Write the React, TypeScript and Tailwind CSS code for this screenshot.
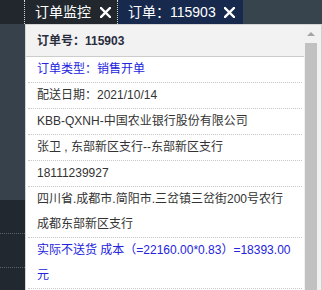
import React from 'react'

function CloseX() {
  return (
    <svg width="11" height="11" viewBox="0 0 11 11" className="block">
      <path d="M1 1 L10 10 M10 1 L1 10" stroke="#fff" strokeWidth="2.4" strokeLinecap="square" />
    </svg>
  )
}

export default function App() {
  const font = { fontFamily: '"Liberation Sans", Arial, "Noto Sans CJK SC", sans-serif' }

  return (
    <div className="w-[322px] h-[290px] overflow-hidden bg-[#37434d] text-[12px]" style={font}>
      {/* tab bar */}
      <div className="flex h-[24px]">
        <div className="w-[25px] bg-[#22272e] border-r border-dotted border-white/80"></div>
        <div className="w-[93px] flex items-center gap-[9px] pl-[10px] bg-[#22272e] border-r border-dotted border-white/80 text-white text-[14px]">
          <span>订单监控</span>
          <CloseX />
        </div>
        <div className="w-[125px] flex items-center gap-[8px] pl-[10px] bg-[#172a4e] text-white text-[14px]">
          <span>订单：115903</span>
          <CloseX />
        </div>
        <div className="flex-1 bg-[#37434d]"></div>
      </div>

      <div className="flex h-[266px]">
        {/* left strip */}
        <div className="w-[25px] flex flex-col">
          <div className="h-[176px] bg-[#36414b]"></div>
          <div className="flex-1 bg-[#22282f] pt-[33px]">
            <div className="h-[34px] border-t border-dotted border-[#5a6169]"></div>
            <div className="border-t border-dotted border-[#5a6169]"></div>
          </div>
        </div>

        {/* popup */}
        <div className="flex-1 flex bg-white border-t border-l border-[#d4d4d4]">
          <div className="w-[278px] flex flex-col">
            <div className="h-[32px] flex items-center pl-[11px] bg-[#f2f2f2] border-b border-[#cccccc] font-bold text-[#2a2d3d]">
              订单号：115903
            </div>
            <div className="px-[2px]">
              <div className="pl-[9px] leading-[25px] border-b border-dotted border-[#c8c8c8] text-[#2323e0]">
                订单类型：销售开单
              </div>
              <div className="pl-[9px] leading-[25px] border-b border-dotted border-[#c8c8c8] text-[#333]">
                配送日期：2021/10/14
              </div>
              <div className="pl-[9px] leading-[25px] border-b border-dotted border-[#c8c8c8] text-[#333]">
                KBB-QXNH-中国农业银行股份有限公司
              </div>
              <div className="pl-[9px] leading-[25px] border-b border-dotted border-[#c8c8c8] text-[#333]">
                张卫 , 东部新区支行--东部新区支行
              </div>
              <div className="pl-[9px] leading-[25px] border-b border-dotted border-[#c8c8c8] text-[#333]">
                18111239927
              </div>
              <div className="pl-[9px] leading-[25px] border-b border-dotted border-[#c8c8c8] text-[#333]">
                四川省.成都市.简阳市.三岔镇三岔街200号农行
                <br />
                成都东部新区支行
              </div>
              <div className="pl-[9px] leading-[25px] border-b border-dotted border-[#c8c8c8] text-[#2323e0]">
                实际不送货 成本（=22160.00*0.83）=18393.00
                <br />
                元
              </div>
            </div>
          </div>

          {/* scrollbar */}
          <div className="w-[14px] flex flex-col bg-[#f1f1f1]">
            <div className="h-[18px] flex items-center justify-center">
              <div className="w-0 h-0 border-l-[4px] border-r-[4px] border-b-[4px] border-l-transparent border-r-transparent border-b-[#a3a3a3]"></div>
            </div>
            <div className="flex-1 mx-[1px] bg-[#c1c1c1]"></div>
          </div>
          <div className="flex-1 bg-[#f1f1f1] border-r border-[#cfcfcf]"></div>
        </div>
      </div>
    </div>
  )
}
